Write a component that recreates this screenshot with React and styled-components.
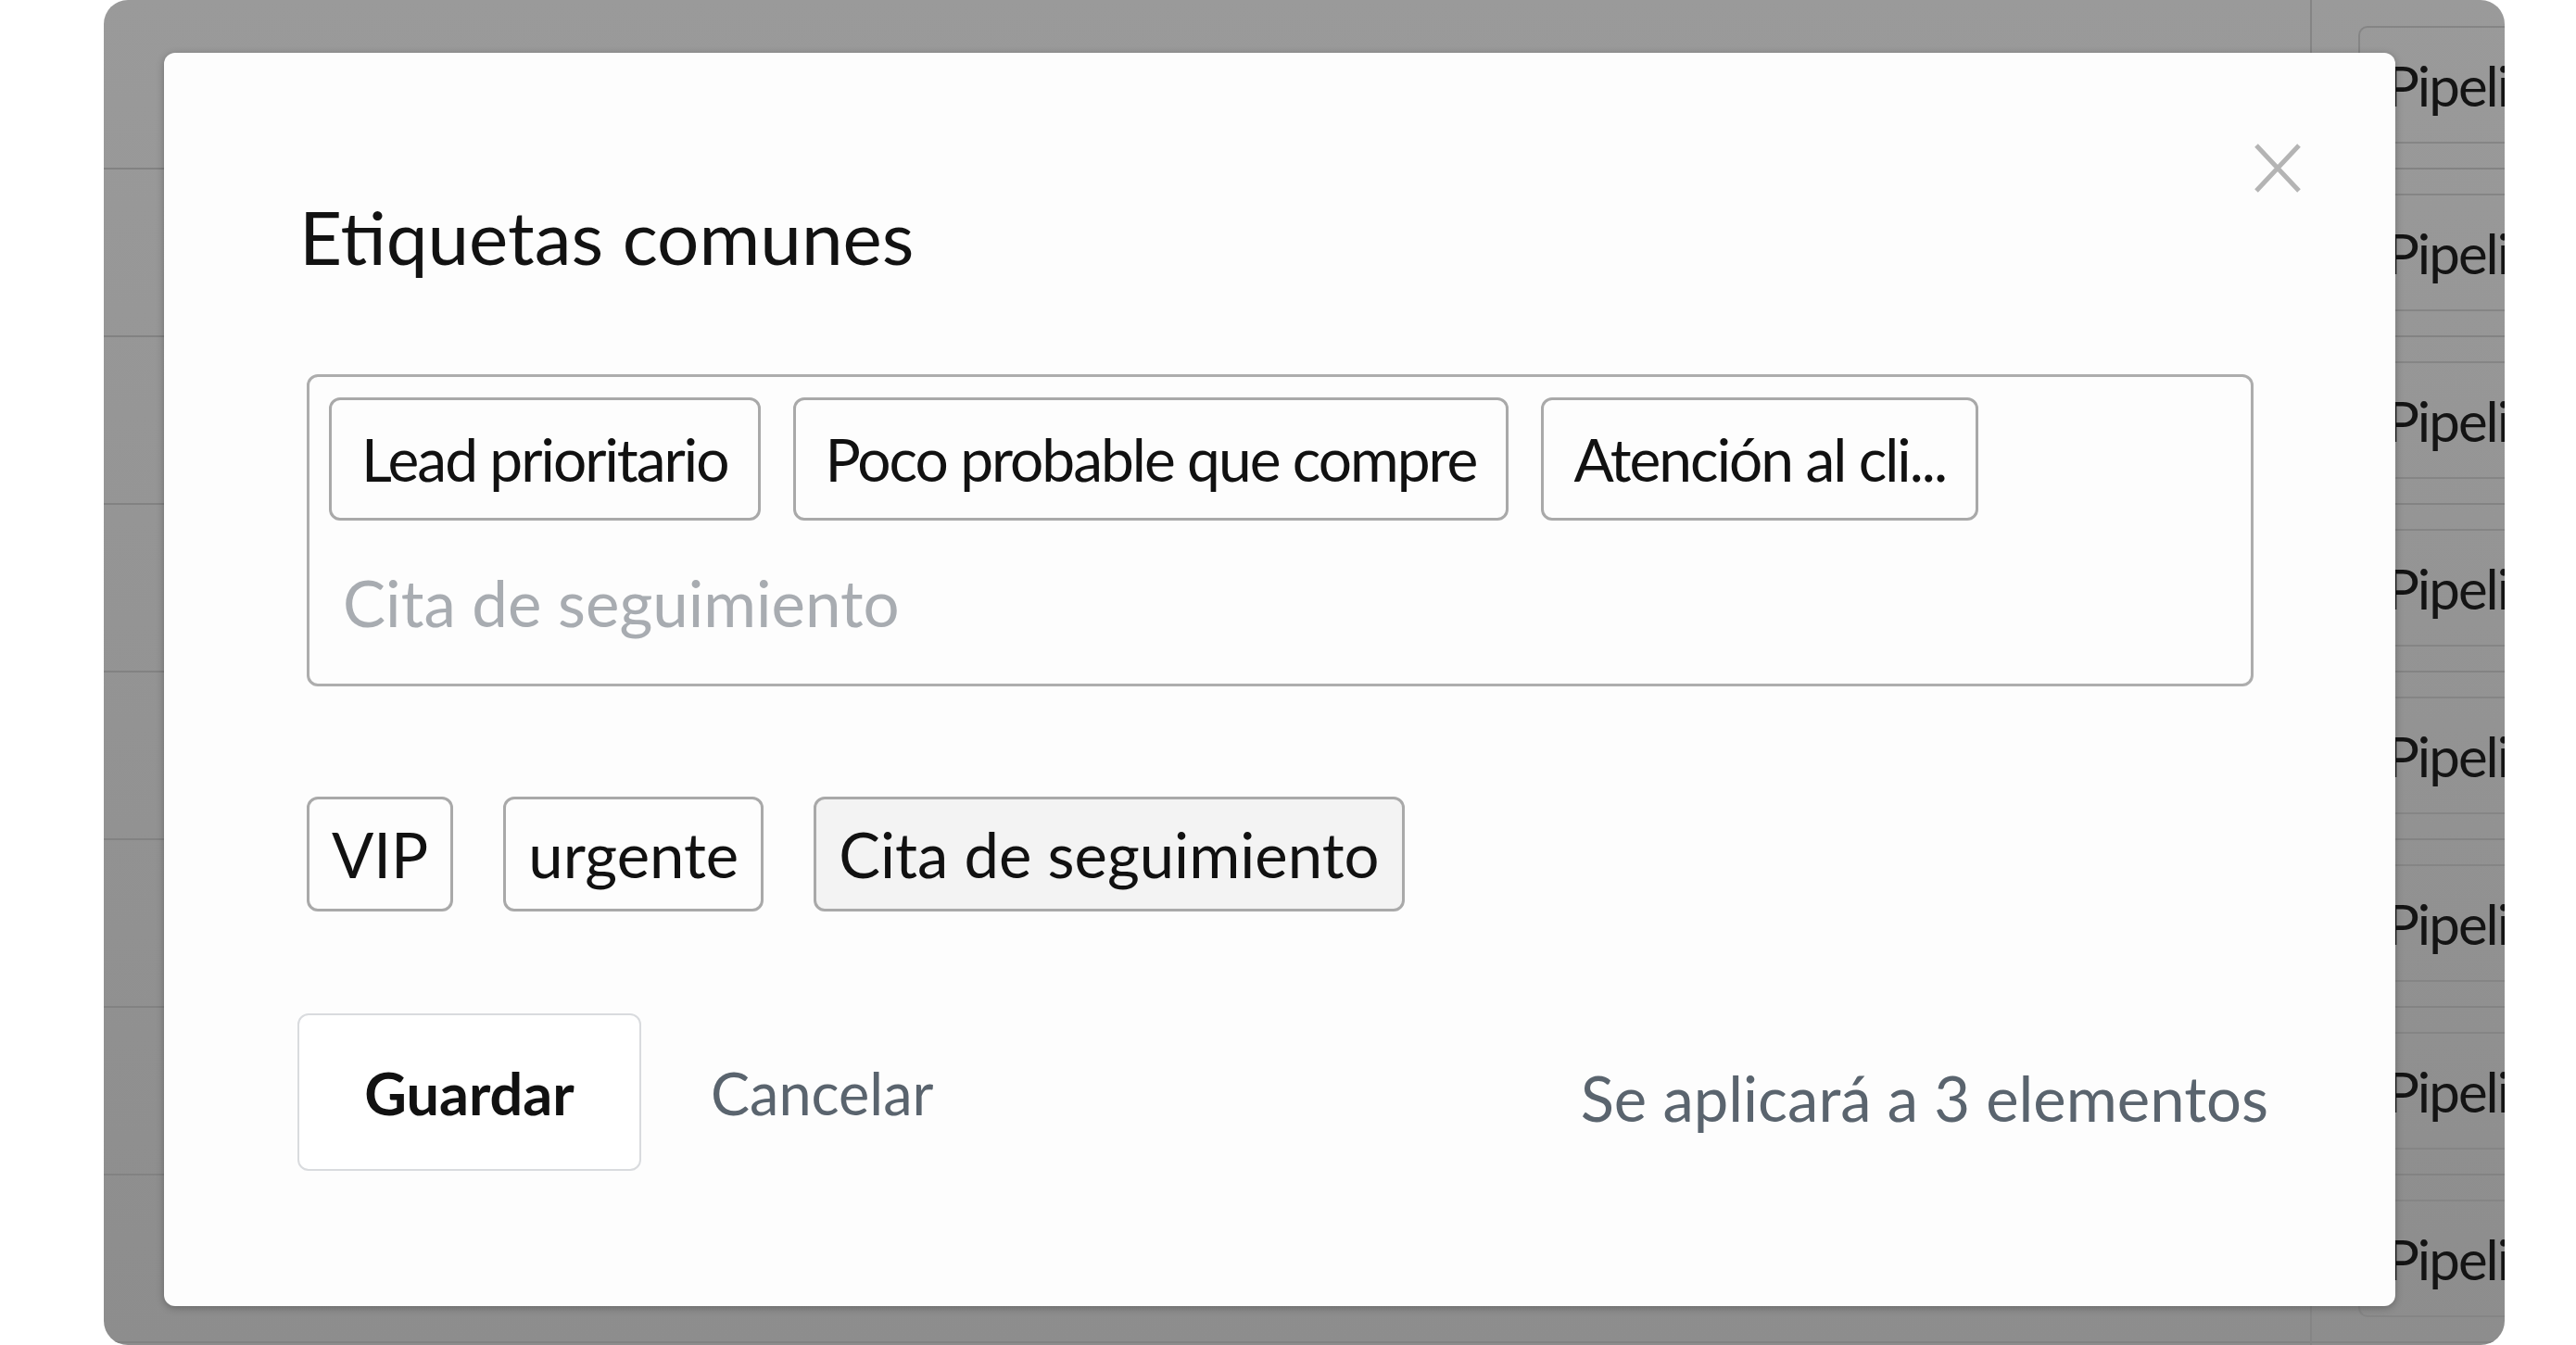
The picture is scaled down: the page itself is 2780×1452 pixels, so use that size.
import React from "react";
import styled, { createGlobalStyle } from "styled-components";

const GlobalStyle = createGlobalStyle`
    html, body {
        margin: 0;
        padding: 0;
        background: #ffffff;
    }
    body {
        font-family: Lato, "Noto Sans", sans-serif;
        -webkit-font-smoothing: antialiased;
    }
`;

const Page = styled.div`
    width: 2780px;
    height: 1452px;
    padding-left: 112px;
    box-sizing: border-box;
    overflow: hidden;
`;

const Screen = styled.div`
    position: relative;
    width: 2591px;
    height: 1452px;
    border-radius: 26px;
    overflow: hidden;
    background: linear-gradient(#9a9a9a, #8d8d8d);
    display: grid;
    grid-template-columns: 2381px 1fr;
`;

const MainColumn = styled.div`
    display: flex;
    flex-direction: column;
    padding-top: 2px;
`;

const MainRow = styled.div`
    height: 181px;
    flex: none;
    box-sizing: border-box;
    border-bottom: 2px solid #828282;
`;

const SideColumn = styled.div`
    display: flex;
    flex-direction: column;
    border-left: 2px solid #858585;
    padding-top: 2px;
`;

const SideRow = styled.div`
    height: 181px;
    flex: none;
    box-sizing: border-box;
    border-bottom: 2px solid #838383;
    padding: 26px 0 26px 50px;
    display: flex;
`;

const PipelineCard = styled.div`
    flex: 1;
    border: 2px solid #858585;
    border-right: none;
    border-radius: 10px 0 0 10px;
    display: flex;
    align-items: center;
    padding-left: 28px;
    font-size: 60px;
    letter-spacing: -2px;
    color: #141414;
    white-space: nowrap;
    overflow: hidden;
`;

const Modal = styled.div`
    position: absolute;
    left: 65px;
    top: 57px;
    width: 2408px;
    height: 1353px;
    box-sizing: border-box;
    padding: 157px 153px 146px 154px;
    background: #fdfdfd;
    border-radius: 12px;
    box-shadow: 0 2px 8px rgba(0, 0, 0, 0.28);
    display: flex;
    flex-direction: column;
`;

const CloseButton = styled.button`
    position: absolute;
    top: 97px;
    right: 101px;
    width: 52px;
    height: 55px;
    padding: 0;
    border: none;
    background: none;
    cursor: pointer;
    svg {
        display: block;
    }
`;

const Title = styled.h2`
    margin: 0 0 108px -8px;
    font-size: 80px;
    line-height: 82px;
    font-weight: 400;
    color: #121212;
`;

const TagBox = styled.div`
    height: 337px;
    box-sizing: border-box;
    border: 3px solid #adadad;
    border-radius: 12px;
    padding: 22px 21px 0;
    display: flex;
    flex-direction: column;
`;

const TagList = styled.div`
    display: flex;
    gap: ${(p) => p.$gap}px;
`;

const Tag = styled.span`
    display: inline-flex;
    align-items: center;
    height: ${(p) => (p.$small ? 124 : 133)}px;
    box-sizing: border-box;
    padding: 0 ${(p) => (p.$small ? 24 : 32)}px;
    border: 3px solid #a9a9a9;
    border-radius: 12px;
    background: ${(p) => (p.$active ? "#f3f3f3" : "#fdfdfd")};
    font-size: ${(p) => (p.$small ? 67 : 64)}px;
    letter-spacing: ${(p) => (p.$small ? 0 : -2)}px;
    color: #111111;
    white-space: nowrap;
`;

const TagInput = styled.input`
    height: 176px;
    width: 100%;
    box-sizing: border-box;
    padding: 0 15px;
    border: none;
    outline: none;
    background: transparent;
    font-family: Lato, "Noto Sans", sans-serif;
    font-size: 69px;
    color: #111111;
    &::placeholder {
        color: #a8acb1;
    }
`;

const Suggestions = styled(TagList)`
    margin-top: 119px;
`;

const Footer = styled.div`
    margin-top: 110px;
    display: flex;
    align-items: center;
`;

const SaveButton = styled.button`
    width: 371px;
    height: 170px;
    margin-left: -10px;
    border: 2px solid #d9dbde;
    border-radius: 12px;
    background: #ffffff;
    font-family: Lato, "Noto Sans", sans-serif;
    font-size: 63px;
    font-weight: 700;
    color: #111111;
    cursor: pointer;
`;

const CancelButton = styled.button`
    margin-left: 75px;
    padding: 0;
    border: none;
    background: none;
    font-family: Lato, "Noto Sans", sans-serif;
    font-size: 63px;
    color: #5a646e;
    cursor: pointer;
`;

const Hint = styled.span`
    margin-left: auto;
    margin-right: -16px;
    padding-top: 12px;
    font-size: 67px;
    color: #5a646e;
`;

const current = ["Lead prioritario", "Poco probable que compre", "Atención al cli..."];
const suggested = [
    { label: "VIP" },
    { label: "urgente" },
    { label: "Cita de seguimiento", active: true },
];

function CloseIcon() {
    return (
        <svg width="52" height="55" viewBox="0 0 52 55">
            <path
                d="M3 3 L49 52 M49 3 L3 52"
                stroke="#b4b4b4"
                strokeWidth="5"
                fill="none"
            />
        </svg>
    );
}

export default function App() {
    const rows = Array.from({ length: 9 });
    return (
        <>
            <GlobalStyle />
            <Page>
                <Screen>
                    <MainColumn>
                        {rows.map((_, i) => (
                            <MainRow key={i} />
                        ))}
                    </MainColumn>
                    <SideColumn>
                        {rows.map((_, i) => (
                            <SideRow key={i}>
                                <PipelineCard>Pipeline</PipelineCard>
                            </SideRow>
                        ))}
                    </SideColumn>
                    <Modal>
                        <CloseButton aria-label="Cerrar">
                            <CloseIcon />
                        </CloseButton>
                        <Title>Etiquetas comunes</Title>
                        <TagBox>
                            <TagList $gap={35}>
                                {current.map((t) => (
                                    <Tag key={t}>{t}</Tag>
                                ))}
                            </TagList>
                            <TagInput placeholder="Cita de seguimiento" />
                        </TagBox>
                        <Suggestions $gap={54}>
                            {suggested.map((t) => (
                                <Tag key={t.label} $small $active={t.active}>
                                    {t.label}
                                </Tag>
                            ))}
                        </Suggestions>
                        <Footer>
                            <SaveButton>Guardar</SaveButton>
                            <CancelButton>Cancelar</CancelButton>
                            <Hint>Se aplicará a 3 elementos</Hint>
                        </Footer>
                    </Modal>
                </Screen>
            </Page>
        </>
    );
}
